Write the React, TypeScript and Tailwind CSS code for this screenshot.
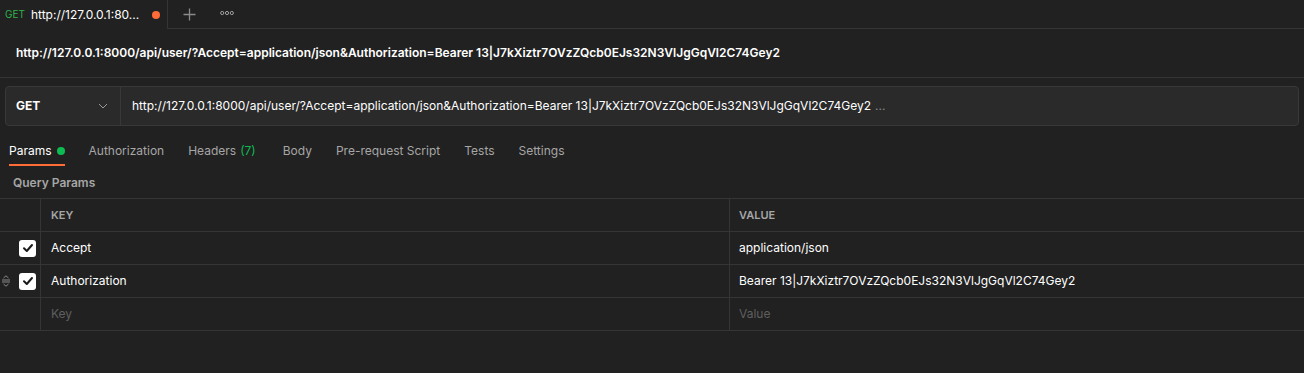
import React from "react";

const TOKEN = "J7kXiztr7OVzZQcb0EJs32N3VlJgGqVl2C74Gey2";
const URL = `http://127.0.0.1:8000/api/user/?Accept=application/json&Authorization=Bearer 13|${TOKEN}`;

function Check() {
  return (
    <div className="w-[17px] h-[17px] rounded-[3px] bg-white flex items-center justify-center">
      <svg width="12" height="12" viewBox="0 0 12 12" fill="none">
        <path d="M2 6.3 L4.8 9 L10 3" stroke="#1a1a1a" strokeWidth="2" strokeLinecap="round" strokeLinejoin="round" />
      </svg>
    </div>
  );
}

function Handle() {
  return (
    <svg width="10" height="12" viewBox="0 0 10 12" fill="none" className="absolute left-[1px]">
      <path d="M2.5 3 L5 0.8 L7.5 3" stroke="#8a8a8a" strokeWidth="1" />
      <path d="M1 5 H9 M1 7 H9" stroke="#8a8a8a" strokeWidth="1" />
      <path d="M2.5 9 L5 11.2 L7.5 9" stroke="#8a8a8a" strokeWidth="1" />
    </svg>
  );
}

function Row({ k, v, checked, handle, placeholder }: { k: string; v: string; checked?: boolean; handle?: boolean; placeholder?: boolean }) {
  return (
    <div className="flex h-[33px] border-b border-[#353535]">
      <div className="relative w-[41px] shrink-0 border-r border-[#353535] flex items-center justify-end pr-[4px]">
        {handle && <Handle />}
        {checked && <Check />}
      </div>
      <div className={`w-[689px] shrink-0 border-r border-[#353535] flex items-center pl-[10px] ${placeholder ? "text-[#5f5f5f]" : "text-white"}`}>
        {k}
      </div>
      <div className={`flex-1 flex items-center pl-[9px] ${placeholder ? "text-[#5f5f5f]" : "text-white"}`}>{v}</div>
    </div>
  );
}

export default function App() {
  const tabs = ["Authorization", "Headers", "Body", "Pre-request Script", "Tests", "Settings"];
  return (
    <div
      className="w-[1304px] h-[373px] bg-[#212121] overflow-hidden text-[12px] text-white"
      style={{ fontFamily: "Inter, 'Noto Sans', sans-serif" }}
    >
      {/* tab bar */}
      <div className="flex h-[29px]">
        <div className="w-[168px] shrink-0 border-r border-[#353535] flex items-center pl-[5px]">
          <span className="text-[10px] text-[#2fb34a] mr-[6px]">GET</span>
          <span className="text-[12px] text-white">http://127.0.0.1:80...</span>
          <span className="ml-[13px] w-[8px] h-[8px] rounded-full bg-[#ff6c37]" />
        </div>
        <div className="flex-1 border-b border-[#353535] flex items-center">
          <svg width="13" height="13" viewBox="0 0 13 13" className="ml-[15px]">
            <path d="M6.5 0.5 V12.5 M0.5 6.5 H12.5" stroke="#8a8a8a" strokeWidth="1.3" />
          </svg>
          <svg width="14" height="6" viewBox="0 0 14 6" className="ml-[24px] mb-[2px]">
            <circle cx="2.2" cy="3" r="1.6" stroke="#a0a0a0" strokeWidth="1" fill="none" />
            <circle cx="7" cy="3" r="1.6" stroke="#a0a0a0" strokeWidth="1" fill="none" />
            <circle cx="11.8" cy="3" r="1.6" stroke="#a0a0a0" strokeWidth="1" fill="none" />
          </svg>
        </div>
      </div>

      {/* title */}
      <div className="h-[49px] border-b border-[#353535] flex items-center pl-[16px] pb-[1px] font-semibold text-[12px]">
        {URL}
      </div>

      {/* url bar */}
      <div className="pt-[8px] px-[5px]">
        <div className="h-[40px] flex rounded-[4px] border border-[#383838] bg-[#2a2a2a]">
          <div className="w-[115px] shrink-0 border-r border-[#383838] flex items-center pl-[10px] pr-[12px] justify-between">
            <span className="font-bold">GET</span>
            <svg width="10" height="6" viewBox="0 0 10 6" fill="none">
              <path d="M1 1 L5 5 L9 1" stroke="#9a9a9a" strokeWidth="1" />
            </svg>
          </div>
          <div className="flex-1 flex items-center pl-[11px]">
            <span>{URL}</span>
            <span className="ml-[4px] text-[#8a8a8a]">...</span>
          </div>
        </div>
      </div>

      {/* request tabs */}
      <div className="flex h-[41px] pt-[8px] pl-[9px] items-stretch text-[12px]">
        <div className="relative flex items-center mr-[24px]">
          <span className="text-white">Params</span>
          <span className="ml-[5px] w-[8px] h-[8px] rounded-full bg-[#0cbb52]" />
          <span className="absolute left-0 right-0 bottom-[1px] h-[2px] bg-[#ff6c37]" />
        </div>
        {tabs.map((t) => (
          <div key={t} className={`flex items-center text-[#a6a6a6] ${t === "Headers" ? "mr-[27px]" : "mr-[24px]"}`}>
            {t}
            {t === "Headers" && <span className="ml-[4px] text-[#0cbb52]">(7)</span>}
          </div>
        ))}
      </div>

      {/* query params */}
      <div className="h-[31px] flex items-center pl-[13px] text-[12px] font-semibold text-[#a6a6a6]">Query Params</div>

      <div className="border-t border-[#353535]">
        <div className="flex h-[33px] border-b border-[#353535] text-[11px] font-semibold text-[#a6a6a6]">
          <div className="w-[41px] shrink-0 border-r border-[#353535]" />
          <div className="w-[689px] shrink-0 border-r border-[#353535] flex items-center pl-[10px]">KEY</div>
          <div className="flex-1 flex items-center pl-[9px]">VALUE</div>
        </div>
        <Row k="Accept" v="application/json" checked />
        <Row k="Authorization" v={`Bearer 13|${TOKEN}`} checked handle />
        <Row k="Key" v="Value" placeholder />
      </div>
    </div>
  );
}
